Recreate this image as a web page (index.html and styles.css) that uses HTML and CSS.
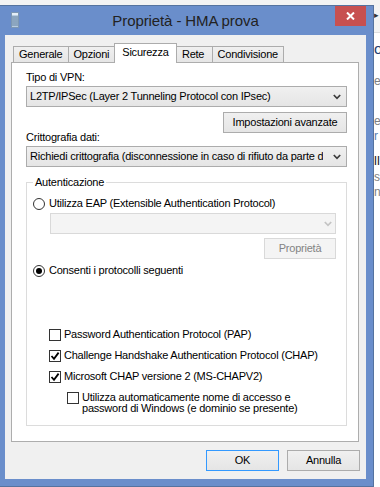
FILE: index.html
```html
<!DOCTYPE html>
<html lang="it">
<head>
    <meta charset="UTF-8">
    <title>Proprietà - HMA prova</title>
    <link rel="stylesheet" href="styles.css">
</head>
<body>
    <!-- finestra dietro al dialogo -->
    <div class="desk">
        <div class="desk-bar"><span class="bar-arrow">&#9656;</span></div>
        <span class="frag frag-o">o</span>
        <span class="frag frag-a">et</span>
        <span class="frag frag-b">et</span>
        <span class="frag frag-c">r</span>
        <span class="frag frag-d">ll</span>
        <span class="frag frag-e">s</span>
        <span class="frag frag-f">ni</span>
    </div>

    <div class="window">
        <div class="titlebar">
            <svg class="app-icon" width="8" height="16" viewBox="0 0 8 16">
                <rect x="0.5" y="0.5" width="7" height="15" fill="#b9cde0" stroke="#7d97b3"/>
                <rect x="1" y="1" width="6" height="2" fill="#e4eef7"/>
                <path d="M1 5h6M1 7h6M1 9h6M1 11h6M1 13h6" stroke="#5f7f9f" stroke-width="1"/>
            </svg>
            <div class="title">Proprietà - HMA prova</div>
            <div class="close">
                <svg width="9" height="8" viewBox="0 0 9 8">
                    <path d="M1 0.5L8 7.5M8 0.5L1 7.5" stroke="#fff" stroke-width="2"/>
                </svg>
            </div>
        </div>

        <div class="client">
            <div class="tabs">
                <div class="tab">Generale</div>
                <div class="tab">Opzioni</div>
                <div class="tab active">Sicurezza</div>
                <div class="tab">Rete</div>
                <div class="tab">Condivisione</div>
            </div>

            <div class="panel">
                <div class="label first">Tipo di VPN:</div>
                <div class="combo">
                    <span class="combo-text">L2TP/IPSec (Layer 2 Tunneling Protocol con IPsec)</span>
                    <svg class="chevron" width="8" height="6" viewBox="0 0 8 6"><path d="M0.8 1L4 4.3L7.2 1" fill="none" stroke="#3c3c3c" stroke-width="1.7"/></svg>
                </div>
                <div class="btn btn-adv">Impostazioni avanzate</div>

                <div class="label second">Crittografia dati:</div>
                <div class="combo combo-crypt">
                    <span class="combo-text">Richiedi crittografia (disconnessione in caso di rifiuto da parte d</span>
                    <svg class="chevron" width="8" height="6" viewBox="0 0 8 6"><path d="M0.8 1L4 4.3L7.2 1" fill="none" stroke="#3c3c3c" stroke-width="1.7"/></svg>
                </div>

                <fieldset class="group">
                    <legend>Autenticazione</legend>

                    <div class="option">
                        <span class="radio"></span>
                        <span>Utilizza EAP (Extensible Authentication Protocol)</span>
                    </div>
                    <div class="combo disabled combo-eap">
                        <span class="combo-text"></span>
                        <svg class="chevron" width="8" height="6" viewBox="0 0 8 6"><path d="M0.8 1L4 4.3L7.2 1" fill="none" stroke="#c4c4c4" stroke-width="1.7"/></svg>
                    </div>
                    <div class="btn disabled btn-prop">Proprietà</div>

                    <div class="option option-allow">
                        <span class="radio checked"></span>
                        <span>Consenti i protocolli seguenti</span>
                    </div>

                    <div class="check-row first-check">
                        <span class="check"></span>
                        <span>Password Authentication Protocol (PAP)</span>
                    </div>
                    <div class="check-row">
                        <span class="check">
                            <svg width="10" height="10" viewBox="0 0 10 10"><path d="M1.5 5L4 7.8L8.6 1.6" fill="none" stroke="#000" stroke-width="1.8"/></svg>
                        </span>
                        <span>Challenge Handshake Authentication Protocol (CHAP)</span>
                    </div>
                    <div class="check-row">
                        <span class="check">
                            <svg width="10" height="10" viewBox="0 0 10 10"><path d="M1.5 5L4 7.8L8.6 1.6" fill="none" stroke="#000" stroke-width="1.8"/></svg>
                        </span>
                        <span>Microsoft CHAP versione 2 (MS-CHAPV2)</span>
                    </div>
                    <div class="check-row sub-check">
                        <span class="check"></span>
                        <span class="multi">Utilizza automaticamente nome di accesso e<br>password di Windows (e dominio se presente)</span>
                    </div>
                </fieldset>
            </div>

            <div class="actions">
                <div class="btn btn-ok">OK</div>
                <div class="btn">Annulla</div>
            </div>
        </div>
    </div>
</body>
</html>
```

FILE: styles.css
```css
* {
    margin: 0;
    padding: 0;
    box-sizing: border-box;
}

body {
    font-family: "Liberation Sans", Arial, sans-serif;
    font-size: 11px;
    line-height: 13px;
    letter-spacing: -0.22px;
    color: #000;
    background: #fff;
    width: 380px;
    height: 487px;
    overflow: hidden;
    position: relative;
}

/* sfondo dietro la finestra */
.desk-bar {
    height: 33px;
    background: #f3f3f3;
    border-bottom: 1px solid #dedede;
    position: relative;
}

.bar-arrow {
    position: absolute;
    left: 374px;
    top: 9px;
    font-size: 9px;
    color: #333;
}

.frag {
    position: absolute;
    left: 374px;
    color: #808080;
    font-size: 12px;
    letter-spacing: 0;
}

.frag-o { top: 42px; color: #1f3d70; font-size: 15px; }
.frag-a { top: 75px; }
.frag-b { top: 115px; }
.frag-c { top: 130px; color: #5a7db0; }
.frag-d { top: 154px; color: #222; font-size: 13px; }
.frag-e { top: 171px; }
.frag-f { top: 186px; }

/* finestra */
.window {
    position: absolute;
    left: -4px;
    top: 5px;
    width: 378px;
    height: 482px;
    background: #6a8ecb;
    border: 1px solid #55739f;
    padding: 0 7px 7px 8px;
}

.titlebar {
    height: 29px;
    display: grid;
    grid-template-columns: 1fr auto 1fr;
    align-items: start;
}

.app-icon {
    margin: 6px 0 0 6px;
}

.title {
    font-size: 15px;
    line-height: 29px;
    letter-spacing: -0.1px;
    color: #222;
}

.close {
    justify-self: end;
    width: 31px;
    height: 20px;
    background: #c75050;
    display: flex;
    align-items: center;
    justify-content: center;
}

.client {
    height: 444px;
    background: #f0f0f0;
    padding: 8px 7px 0 6px;
}

/* schede */
.tabs {
    display: flex;
    align-items: flex-end;
    height: 20px;
    padding-left: 2px;
}

.tab {
    height: 17px;
    min-width: 39px;
    padding: 0 5px;
    margin-left: -1px;
    text-align: center;
    line-height: 15px;
    border: 1px solid #acacac;
    border-bottom: none;
    background: linear-gradient(#f0f0f0, #e5e5e5);
}

.tab:first-child {
    margin-left: 0;
}

.tab.active {
    position: relative;
    z-index: 2;
    height: 20px;
    margin: 0 -2px 0 -1px;
    padding: 0 7px;
    line-height: 16px;
    background: #fff;
}

.panel {
    position: relative;
    z-index: 1;
    height: 380px;
    margin-top: -1px;
    background: #fff;
    border: 1px solid #adadad;
    padding: 8px 11px 0 14px;
    display: flex;
    flex-direction: column;
}

.label.second {
    margin-top: -2px;
}

/* combo e pulsanti */
.combo {
    height: 21px;
    margin-top: 2px;
    display: flex;
    align-items: center;
    justify-content: space-between;
    padding: 0 5px 0 3px;
    border: 1px solid #acacac;
    background: linear-gradient(#f0f0f0, #e5e5e5);
}

.combo-text {
    white-space: nowrap;
    overflow: hidden;
}

.chevron {
    flex-shrink: 0;
    margin-left: 6px;
}

.btn {
    height: 21px;
    width: 73px;
    line-height: 19px;
    text-align: center;
    border: 1px solid #acacac;
    background: linear-gradient(#f0f0f0, #e5e5e5);
}

.btn-adv {
    align-self: flex-end;
    width: 124px;
    margin-top: 5px;
}

.combo.disabled,
.btn.disabled {
    background: #f4f4f4;
    border-color: #d9d9d9;
    color: #838383;
}

/* gruppo autenticazione */
.group {
    margin-top: 9px;
    border: 1px solid #dcdcdc;
    padding: 8px 10px 11px 6px;
    display: flex;
    flex-direction: column;
}

.group legend {
    padding: 0 2px;
}

.option,
.check-row {
    display: flex;
    align-items: center;
    gap: 4px;
    height: 13px;
}

.radio {
    width: 12px;
    height: 12px;
    border: 1px solid #333;
    border-radius: 50%;
    background: #fff;
    display: flex;
    align-items: center;
    justify-content: center;
}

.radio.checked::after {
    content: "";
    width: 6px;
    height: 6px;
    border-radius: 50%;
    background: #000;
}

.combo-eap {
    width: 286px;
    align-self: flex-end;
    margin-top: 3px;
    padding-right: 3px;
}

.btn-prop {
    width: 72px;
    align-self: flex-end;
    margin-top: 4px;
}

.option-allow {
    margin-top: 5px;
}

.check-row {
    margin-top: 8px;
    margin-left: 16px;
    gap: 3px;
}

.check-row.first-check {
    margin-top: 51px;
}

.check {
    width: 12px;
    height: 12px;
    border: 1px solid #333;
    background: #fff;
    display: flex;
    align-items: center;
    justify-content: center;
}

.check-row.sub-check {
    margin-left: 34px;
    margin-top: 9px;
    height: 22px;
    align-items: flex-start;
}

.multi {
    line-height: 11px;
}

/* pulsanti in basso */
.actions {
    display: flex;
    justify-content: flex-end;
    gap: 8px;
    margin-top: 8px;
    margin-right: -1px;
}

.btn-ok {
    border-color: #3399ff;
}
```
